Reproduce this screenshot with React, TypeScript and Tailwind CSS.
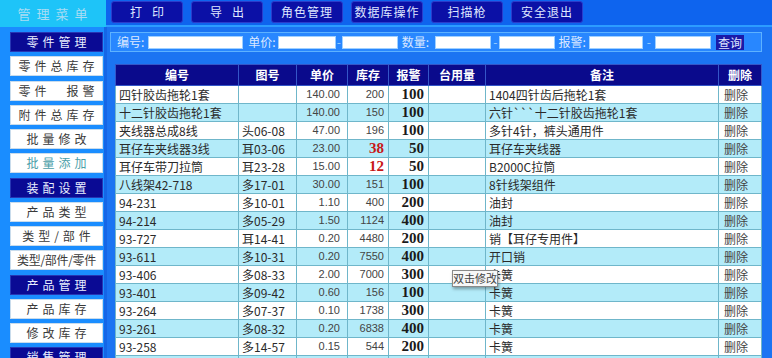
import React from "react";

type Row = {
  code: string;
  fig: string;
  price: string;
  stock: string;
  red?: boolean;
  alarm: string;
  note: string;
};

const rows: Row[] = [
  { code: "四针胶齿拖轮1套", fig: "", price: "140.00", stock: "200", alarm: "100", note: "1404四针齿后拖轮1套" },
  { code: "十二针胶齿拖轮1套", fig: "", price: "140.00", stock: "150", alarm: "100", note: "六针```十二针胶齿拖轮1套" },
  { code: "夹线器总成8线", fig: "头06-08", price: "47.00", stock: "196", alarm: "100", note: "多针4针，裤头通用件" },
  { code: "耳仔车夹线器3线", fig: "耳03-06", price: "23.00", stock: "38", red: true, alarm: "50", note: "耳仔车夹线器" },
  { code: "耳仔车带刀拉筒", fig: "耳23-28", price: "15.00", stock: "12", red: true, alarm: "50", note: "B2000C拉筒" },
  { code: "八线架42-718", fig: "多17-01", price: "30.00", stock: "151", alarm: "100", note: "8针线架组件" },
  { code: "94-231", fig: "多10-01", price: "1.10", stock: "400", alarm: "200", note: "油封" },
  { code: "94-214", fig: "多05-29", price: "1.50", stock: "1124", alarm: "400", note: "油封" },
  { code: "93-727", fig: "耳14-41", price: "0.20", stock: "4480", alarm: "200", note: "销【耳仔专用件】" },
  { code: "93-611", fig: "多10-31", price: "0.20", stock: "7550", alarm: "400", note: "开口销" },
  { code: "93-406", fig: "多08-33", price: "2.00", stock: "7000", alarm: "300", note: "卡簧" },
  { code: "93-401", fig: "多09-42", price: "0.60", stock: "156", alarm: "100", note: "卡簧" },
  { code: "93-264", fig: "多07-37", price: "0.10", stock: "1738", alarm: "300", note: "卡簧" },
  { code: "93-261", fig: "多08-32", price: "0.20", stock: "6838", alarm: "400", note: "卡簧" },
  { code: "93-258", fig: "多14-57", price: "0.15", stock: "544", alarm: "200", note: "卡簧" },
  { code: "93-252", fig: "多14-50", price: "0.15", stock: "620", alarm: "200", note: "卡簧" },
];

type SideItem = { label: string; head?: boolean; visited?: boolean; tight?: boolean };

const side: SideItem[] = [
  { label: "零件管理", head: true },
  { label: "零件总库存" },
  { label: "零件　报警" },
  { label: "附件总库存" },
  { label: "批量修改" },
  { label: "批量添加", visited: true },
  { label: "装配设置", head: true },
  { label: "产品类型" },
  { label: "类型/部件" },
  { label: "类型/部件/零件", tight: true },
  { label: "产品管理", head: true },
  { label: "产品库存" },
  { label: "修改库存" },
  { label: "销售管理", head: true },
];

const navs: { label: string; wide?: boolean }[] = [
  { label: "打印", wide: true },
  { label: "导出", wide: true },
  { label: "角色管理" },
  { label: "数据库操作" },
  { label: "扫描枪" },
  { label: "安全退出" },
];

const cjk = "font-['Noto_Sans_CJK_SC','Noto_Sans',sans-serif]";

function Input({ w }: { w: string }) {
  return <div className={`${w} h-[13px] bg-white border border-[#9fd0ff]`} />;
}

export default function App() {
  return (
    <div className={`relative w-[772px] h-[358px] overflow-hidden bg-[#1b74f2] ${cjk} flex flex-col`}>
      {/* top bar */}
      <div className="flex h-[27px] shrink-0">
        <div className="w-[106px] bg-[#1ec4f8] flex items-center justify-center pl-[5px] text-[13px] tracking-[6px] text-[#a8dcf4]">
          管理菜单
        </div>
        <div className="flex-1 bg-[#0e64ee] border-b-2 border-[#2c9cff] flex items-start gap-[8px] pl-[5px] pt-[1px]">
          {navs.map((n) => (
            <div
              key={n.label}
              className={`w-[72px] h-[22px] rounded-[3px] bg-[#0b10a6] border border-[#2a3ccc] flex items-center justify-center text-[12px] text-[#dfe7ff] ${
                n.wide ? "tracking-[10px] pl-[10px]" : "tracking-[1px]"
              }`}
            >
              {n.label}
            </div>
          ))}
        </div>
      </div>

      <div className="flex flex-1 min-h-0">
        {/* sidebar */}
        <div className="w-[107px] shrink-0 bg-[#1a8dff] border-r-[3px] border-[#1566e6] flex flex-col gap-[4.25px] pl-[10px] pr-[1px] pt-[5px]">
          {side.map((s) =>
            s.head ? (
              <div
                key={s.label}
                className="h-[20px] shrink-0 bg-[#0a0a94] border border-[#2636b4] flex items-center justify-center pl-[4px] text-[12px] tracking-[4px] text-[#e8eeff]"
              >
                {s.label}
              </div>
            ) : (
              <div
                key={s.label}
                className={`h-[20px] shrink-0 bg-white border border-[#c9dcec] flex items-center justify-center whitespace-nowrap text-[12px] ${
                  s.tight ? "tracking-[-0.3px]" : "tracking-[4px] pl-[4px]"
                } ${s.visited ? "text-[#4a9ea8]" : "text-[#3a3a3a]"}`}
              >
                {s.label}
              </div>
            )
          )}
        </div>

        {/* main */}
        <div className="flex-1 flex flex-col pl-[3px] pr-[11px] pt-[5px]">
          <div className="h-[24px] bg-[#2887ff] border border-[#5db2ff] flex items-center pl-[6px] text-[12px] text-[#dce9ff]">
            <span>编号:</span>
            <span className="w-[4px]" />
            <Input w="w-[95px]" />
            <span className="ml-[5px]">单价:</span>
            <span className="w-[2px]" />
            <Input w="w-[58px]" />
            <span className="mx-[1px] text-[#9fd0ff]">-</span>
            <Input w="w-[56px]" />
            <span className="ml-[4px]">数量:</span>
            <span className="w-[6px]" />
            <Input w="w-[56px]" />
            <span className="mx-[2px] text-[#9fd0ff]">-</span>
            <Input w="w-[56px]" />
            <span className="ml-[3px]">报警:</span>
            <span className="w-[3px]" />
            <Input w="w-[54px]" />
            <span className="mx-[4px] text-[#9fd0ff]">-</span>
            <Input w="w-[56px]" />
            <span className="ml-[5px] h-[15px] px-[2px] bg-[#1a1aa8] text-[#dfe6ff] leading-[15px]">查询</span>
          </div>

          <div className="mt-[12px] pl-[5px]">
            <table className="table-fixed border-collapse w-[646px] border border-[#7cc4d8]">
              <colgroup>
                <col className="w-[123px]" />
                <col className="w-[58px]" />
                <col className="w-[51px]" />
                <col className="w-[41px]" />
                <col className="w-[40px]" />
                <col className="w-[57px]" />
                <col className="w-[233px]" />
                <col className="w-[43px]" />
              </colgroup>
              <thead>
                <tr className="h-[21px] bg-[#0a0a8c] text-white text-[12px] font-bold">
                  {["编号", "图号", "单价", "库存", "报警", "台用量", "备注", "删除"].map((h) => (
                    <th key={h} className="border border-[#3456c8] p-0 text-center font-bold">
                      {h}
                    </th>
                  ))}
                </tr>
              </thead>
              <tbody>
                {rows.map((r, i) => (
                  <tr key={i} className={`h-[18px] ${i % 2 === 1 ? "bg-[#b3ebf9]" : "bg-white"} text-[12px] text-[#2a2a2a]`}>
                    <td className="border border-[#6fb6ca] p-0 pl-[3px] whitespace-nowrap overflow-hidden leading-[17px]">{r.code}</td>
                    <td className="border border-[#6fb6ca] p-0 pl-[3px] whitespace-nowrap leading-[17px]">{r.fig}</td>
                    <td className="border border-[#6fb6ca] p-0 pr-[7px] text-right font-['Liberation_Sans',sans-serif] text-[11px] text-[#444] leading-[17px]">
                      {r.price}
                    </td>
                    <td
                      className={`border border-[#6fb6ca] p-0 pr-[4px] text-right leading-[17px] ${
                        r.red
                          ? "font-['Liberation_Serif',serif] font-bold text-[15px] text-[#c81818]"
                          : "font-['Liberation_Sans',sans-serif] text-[11px] text-[#444]"
                      }`}
                    >
                      {r.stock}
                    </td>
                    <td className="border border-[#6fb6ca] p-0 pr-[4px] text-right font-['Liberation_Serif',serif] font-bold text-[15px] text-[#1a1a1a] leading-[17px]">
                      {r.alarm}
                    </td>
                    <td className="border border-[#6fb6ca] p-0" />
                    <td className="border border-[#6fb6ca] p-0 pl-[3px] whitespace-nowrap leading-[17px]">{r.note}</td>
                    <td className="border border-[#6fb6ca] p-0 pl-[5px] text-[#444] leading-[17px]">删除</td>
                  </tr>
                ))}
              </tbody>
            </table>
          </div>
        </div>
      </div>

      {/* tooltip */}
      <div className="absolute left-[452px] top-[270px] w-[46px] h-[17px] bg-[#f7f7f7] border border-[#8a8a8a] shadow-[1px_2px_3px_rgba(0,0,0,0.35)] flex items-center justify-center text-[11px] text-[#444]">
        双击修改
      </div>
    </div>
  );
}
